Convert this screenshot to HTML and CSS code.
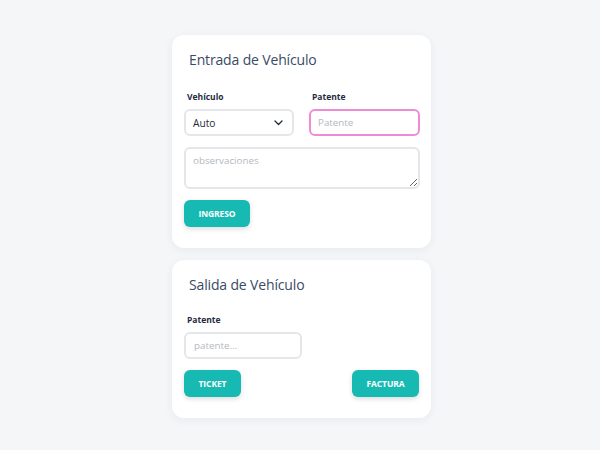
FILE: index.html
```html
<!DOCTYPE html>
<html lang="es">
<head>
<meta charset="utf-8">
<title>Estacionamiento</title>
<link rel="stylesheet" href="styles.css">
</head>
<body>
<main class="page">
  <section class="card card-in">
    <h2 class="title">Entrada de Vehículo</h2>
    <div class="row">
      <div class="field">
        <label class="label" for="veh">Vehículo</label>
        <div class="select-wrap">
          <select id="veh" class="control select">
            <option>Auto</option>
            <option>Moto</option>
            <option>Camioneta</option>
          </select>
          <svg class="chev" width="9" height="6" viewBox="0 0 9 6"><path d="M1 1l3.5 3.5L8 1" fill="none" stroke="#1f2a3a" stroke-width="1.3" stroke-linecap="round" stroke-linejoin="round"/></svg>
        </div>
      </div>
      <div class="field">
        <label class="label" for="pat">Patente</label>
        <input id="pat" class="control focus" type="text" placeholder="Patente" autofocus>
      </div>
    </div>
    <textarea class="control area" placeholder="observaciones"></textarea>
    <div class="actions">
      <button class="btn btn-ingreso">INGRESO</button>
    </div>
  </section>

  <section class="card card-out">
    <h2 class="title">Salida de Vehículo</h2>
    <label class="label label-out" for="pat2">Patente</label>
    <input id="pat2" class="control short" type="text" placeholder="patente...">
    <div class="actions split">
      <button class="btn btn-ticket">TICKET</button>
      <button class="btn btn-factura">FACTURA</button>
    </div>
  </section>
</main>
</body>
</html>
```

FILE: styles.css
```css
* { box-sizing: border-box; }
html, body { margin: 0; padding: 0; }
body {
  background: #f4f6f8;
  font-family: "Open Sans", "Noto Sans", sans-serif;
  width: 600px;
  height: 450px;
  overflow: hidden;
}
.page {
  display: flex;
  flex-direction: column;
  align-items: center;
  gap: 12px;
  padding-top: 35px;
  padding-left: 3px;
}
.card {
  width: 259px;
  background: #ffffff;
  border-radius: 12px;
  box-shadow: 0 2px 10px rgba(40, 60, 90, 0.06);
  padding: 12px 12px 21px 12px;
  display: flex;
  flex-direction: column;
}
.title {
  margin: 3px 0 0 5px;
  font-size: 14px;
  line-height: 20px;
  font-weight: 500;
  letter-spacing: -0.15px;
  color: #3a4b66;
}
.label {
  display: block;
  font-size: 8.5px;
  line-height: 12px;
  font-weight: 700;
  color: #1e2b43;
  margin: 0 0 6px 3px;
}
.row {
  display: grid;
  grid-template-columns: 110px 111px;
  column-gap: 15px;
  margin-top: 21px;
}
.field { display: flex; flex-direction: column; }
.control {
  font-family: "Open Sans", "Noto Sans", sans-serif;
  font-size: 9.8px;
  color: #2a3446;
  border: 2px solid #e4e6ea;
  border-radius: 6px;
  background: #fff;
  height: 27px;
  padding: 0 8px;
  outline: none;
}
.control::placeholder { color: #b3b8c0; }
.select-wrap { position: relative; }
.select {
  width: 100%;
  appearance: none;
  -webkit-appearance: none;
  padding-left: 7px;
  font-size: 10.2px;
  color: #252d3b;
}
.chev {
  position: absolute;
  right: 11px;
  top: 11px;
  pointer-events: none;
}
.focus {
  border-color: #ef8bd5;
  padding-left: 7px;
  caret-color: #555;
}
.area {
  margin-top: 11px;
  height: 42px;
  width: 236px;
  padding: 5px 7px;
  resize: vertical;
}
.actions {
  display: flex;
  margin-top: 11px;
}
.split { justify-content: space-between; }
.btn {
  font-family: "Open Sans", "Noto Sans", sans-serif;
  font-size: 8.5px;
  font-weight: 700;
  color: #fff;
  background: #17bab2;
  border: none;
  border-radius: 6px;
  height: 27px;
  box-shadow: 0 2px 5px rgba(0, 0, 0, 0.14);
  padding: 0;
  letter-spacing: -0.1px;
}
.btn-ingreso { width: 66px; }
.btn-ticket { width: 57px; }
.btn-factura { width: 67px; }
.label-out { margin-top: 19px; }
.short { width: 118px; padding-left: 8px; }
```
